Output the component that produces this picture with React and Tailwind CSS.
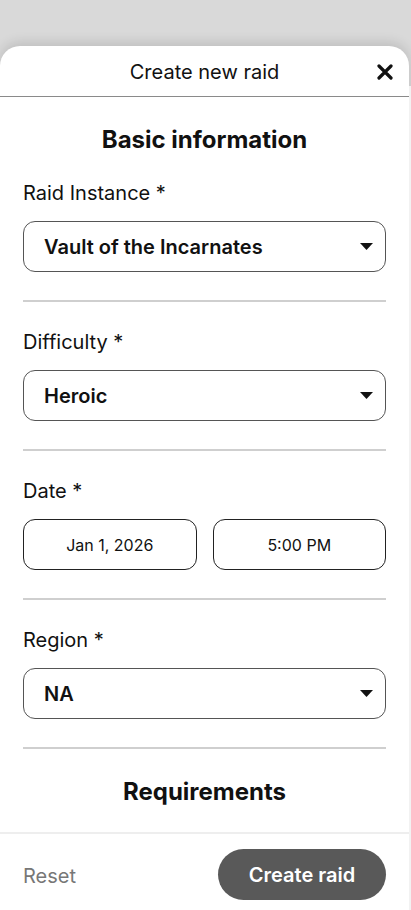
import React from "react";

const font = { fontFamily: "Inter, 'Noto Sans', sans-serif" };

const Caret = () => (
  <svg width="13" height="7" viewBox="0 0 13 7" className="shrink-0">
    <path d="M0 0 H13 L6.5 7 Z" fill="#111" />
  </svg>
);

const SelectBox = ({ value }) => (
  <div className="h-[51px] flex items-center justify-between pl-[20px] pr-[12px] border border-[#555] rounded-[12px]">
    <span className="text-[20px] font-semibold text-[#111]">{value}</span>
    <Caret />
  </div>
);

const Field = ({ label, children }) => (
  <div>
    <p className="mt-[27px] text-[20px] leading-[27px] text-[#111]">{label}</p>
    <div className="mt-[14px]">{children}</div>
    <div className="mt-[28px] h-[2px] bg-[#cfcfcf]" />
  </div>
);

const App = () => {
  return (
    <div style={font} className="h-[910px] w-[411px] bg-[#d9d9d9] pt-[46px] flex overflow-hidden">
      {/* Sheet */}
      <div className="w-[409px] bg-white rounded-t-[20px] shadow-[0_-4px_12px_rgba(0,0,0,0.12)] flex flex-col">
        {/* Header */}
        <div className="relative h-[51px] flex items-center justify-center pt-[2px] border-b border-[#8a8a8a]">
          <span className="text-[20px] text-[#111]">Create new raid</span>
          <svg width="16" height="16" viewBox="0 0 16 16" className="absolute right-[16px] top-[18px]">
            <path d="M2 2 L14 14 M14 2 L2 14" stroke="#111" strokeWidth="3.2" strokeLinecap="round" />
          </svg>
        </div>

        {/* Content */}
        <div className="flex-1 overflow-hidden px-[23px]">
          <h2 className="pt-[29px] -mb-px text-center text-[24px] leading-[28px] font-bold text-[#111]">
            Basic information
          </h2>

          <Field label="Raid Instance *">
            <SelectBox value="Vault of the Incarnates" />
          </Field>

          <Field label="Difficulty *">
            <SelectBox value="Heroic" />
          </Field>

          <Field label="Date *">
            <div className="grid grid-cols-2 gap-[16px]">
              <div className="h-[51px] flex items-center justify-center border border-[#222] rounded-[12px] text-[16px] text-[#111]">
                Jan 1, 2026
              </div>
              <div className="h-[51px] flex items-center justify-center border border-[#222] rounded-[12px] text-[16px] text-[#111]">
                5:00 PM
              </div>
            </div>
          </Field>

          <Field label="Region *">
            <SelectBox value="NA" />
          </Field>

          <h2 className="pt-[29px] text-center text-[24px] leading-[28px] font-bold text-[#111]">
            Requirements
          </h2>
        </div>

        {/* Footer */}
        <div className="h-[78px] shrink-0 border-t-2 border-[#eeeeee] pt-[15px] px-[23px] flex items-start justify-between">
          <span className="mt-[12px] text-[20px] text-[#777]">Reset</span>
          <button className="h-[51px] w-[168px] rounded-full bg-[#595959] text-white text-[20px] font-semibold">
            Create raid
          </button>
        </div>
      </div>
      <div className="flex-1 mt-[40px] bg-[#f2f2f2]" />
    </div>
  );
};

export default App;
